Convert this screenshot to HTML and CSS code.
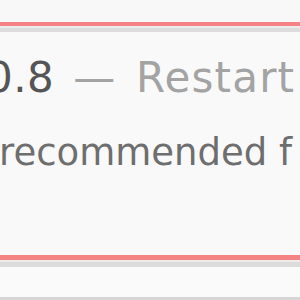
FILE: index.html
```html
<!DOCTYPE html>
<html>
<head>
<meta charset="utf-8">
<link rel="stylesheet" href="styles.css">
</head>
<body>
<div class="page">
  <div class="pad-top"></div>
  <div class="rule-red"></div>
  <div class="rule-soft"></div>
  <div class="rule-gray"></div>
  <div class="panel">
    <div class="title"><span class="ver">0.8</span> <span class="dim">— Restart</span></div>
    <div class="note">recommended f</div>
  </div>
  <div class="rule-red bottom"></div>
  <div class="rule-soft"></div>
  <div class="rule-gray bottom"></div>
  <div class="pad-bottom"></div>
  <div class="rule-gray last"></div>
</div>
</body>
</html>
```
FILE: styles.css
```css
html, body { margin: 0; padding: 0; }
body {
  width: 300px;
  height: 300px;
  overflow: hidden;
  background: #f7f7f7;
  font-family: "DejaVu Sans", sans-serif;
}
.page { display: flex; flex-direction: column; height: 300px; }
.pad-top { height: 22px; background: #f8f8f8; flex: none; }
.rule-red { height: 4px; background: #f58383; flex: none; }
.rule-red.bottom { height: 5px; }
.rule-soft { height: 2px; background: #ececec; flex: none; }
.rule-gray { height: 4px; background: #dcdcdc; flex: none; }
.rule-gray.bottom { height: 5px; }
.rule-gray.last { height: 3px; background: #d6d6d6; }
.panel {
  height: 223px;
  flex: none;
  background: #f9f9f9;
  overflow: hidden;
  white-space: nowrap;
}
.title {
  font-size: 42px;
  line-height: 48px;
  letter-spacing: 0.5px;
  word-spacing: 5px;
  margin-top: 22px;
  margin-left: -14px;
  color: #a3a3a3;
}
.dim { letter-spacing: 1.2px; }
.ver { color: #555; }
.note {
  font-size: 37px;
  line-height: 48px;
  margin-top: 27px;
  margin-left: -1px;
  color: #6e6e6e;
}
.pad-bottom { height: 30px; background: #fafafa; flex: none; }
```
